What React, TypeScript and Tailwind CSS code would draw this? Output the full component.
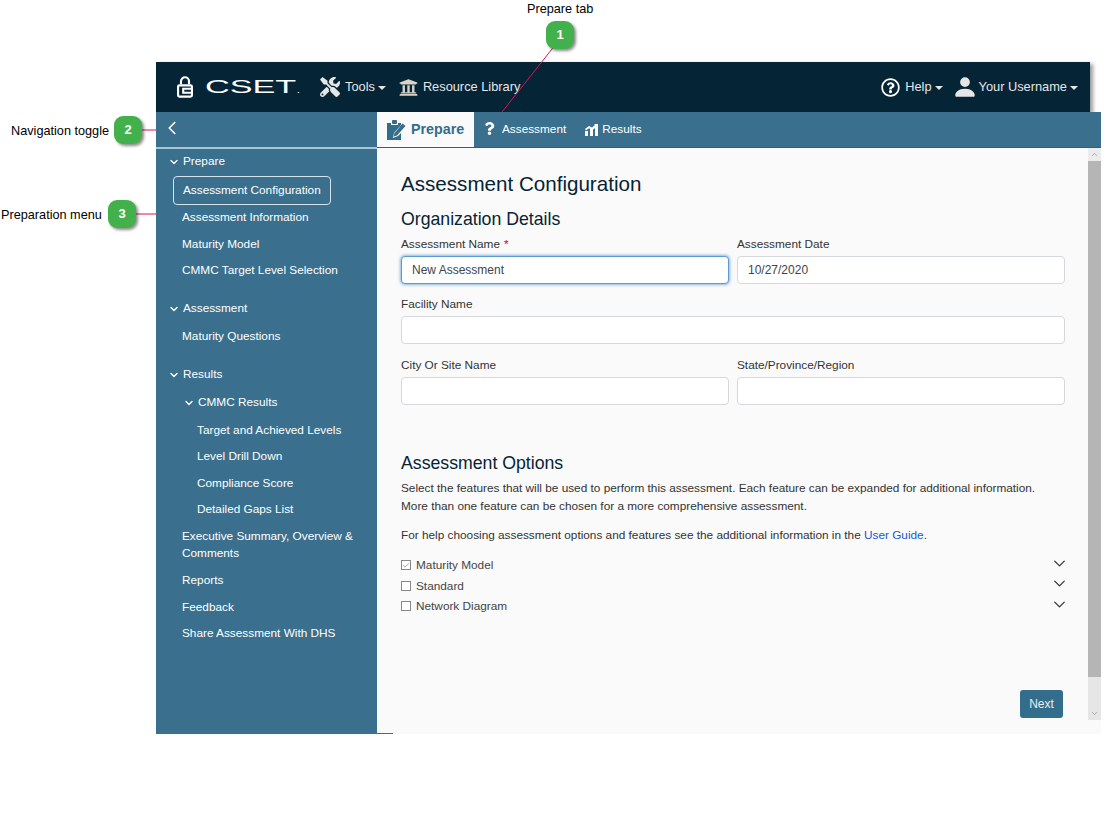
import { FaTools, FaUniversity, FaRegQuestionCircle, FaQuestion } from 'react-icons/fa';
import { BsPersonFill } from 'react-icons/bs';
import { ChevronDown, ChevronLeft, Check } from 'lucide-react';

const FONT = "font-['Liberation_Sans',Arial,sans-serif]";

function Caret() {
  return <span className="ml-[3px] inline-block w-0 h-0 border-x-[4px] border-x-transparent border-t-[4px] border-t-[#e6e6e6] align-middle" />;
}

function LockIcon() {
  return (
    <svg width="16" height="22" viewBox="0 0 18 24" fill="none" stroke="#fff" strokeWidth="2.400">
      <path d="M4.500 9V5.500a4.500 4.500 0 0 1 9 0V9" />
      <rect x="1.200" y="10.200" width="15.600" height="12.600" rx="1.500" />
      <path d="M17 14H7v4.500h10" />
    </svg>
  );
}

function PrepareIcon() {
  return (
    <svg width="19" height="20" viewBox="0 0 19 20" fill="#336d8c">
      <path d="M0 3h4v2h7V3h3v2l-7 8-1 5 5-2 3-3v7H0z" />
      <rect x="5" y="0" width="5" height="4" rx="1" />
      <path d="M15.500 3.500l3 2.500-8.500 9.500-3.300 1 .8-3.300z" />
    </svg>
  );
}

function ResultsIcon() {
  return (
    <svg width="13" height="12" viewBox="0 0 13 12" fill="#fff">
      <rect x="0" y="7" width="3" height="5" />
      <rect x="5" y="5" width="3" height="7" />
      <rect x="10" y="3" width="3" height="9" />
      <path d="M0 5l4-3 3 1.500L10 1 9 0h4v4l-1.200-1.200L7.300 6 4 4.300 1 6.500z" />
    </svg>
  );
}

function MenuHeader({ label, indent = false }: { label: string; indent?: boolean }) {
  return (
    <div className={`flex items-center gap-[3px] ${indent ? 'pl-[27px]' : 'pl-[12px]'}`}>
      <ChevronDown size={12} strokeWidth={2.800} className="text-white" />
      <span>{label}</span>
    </div>
  );
}

function Field({ label, value, required, focused }: { label: string; value?: string; required?: boolean; focused?: boolean }) {
  return (
    <div className="flex-1 min-w-0">
      <div className="text-[11.800px] leading-[15px] text-[#333] mb-[4px]">
        {label}
        {required && <span className="text-[#e00] ml-1">*</span>}
      </div>
      <div
        className={`h-[28px] rounded-[4px] bg-white px-[10px] text-[12px] leading-[26px] text-[#444] border ${
          focused ? 'border-[#5b9bd1] shadow-[0_0_3px_1px_rgba(91,155,209,0.7)] bg-[#f8f9fa]' : 'border-[#d5d8dc]'
        }`}
      >
        {value}
      </div>
    </div>
  );
}

function OptionRow({ label, checked }: { label: string; checked?: boolean }) {
  return (
    <div className="flex items-center h-[20.500px] text-[11.800px] text-[#444]">
      <span className="w-[10px] h-[10px] border border-[#888] bg-white mr-[5px] flex items-center justify-center -mt-[2px]">
        {checked && <Check size={9} strokeWidth={2} className="text-[#777]" />}
      </span>
      <span className="flex-1">{label}</span>
      <ChevronDown size={19} strokeWidth={1.600} className="text-[#333] -mt-[6px] -mr-[4px]" />
    </div>
  );
}

function Badge({ n, className }: { n: number; className: string }) {
  return (
    <div
      className={`absolute w-[28px] h-[28px] rounded-[9px] bg-[#43b14b] text-white font-bold text-[13px] flex items-center justify-center shadow-[2px_2px_3px_rgba(0,0,0,0.45)] ${className}`}
    >
      {n}
    </div>
  );
}

export default function App() {
  return (
    <div className={`relative w-[1110px] h-[818px] bg-white overflow-hidden pt-[62px] pl-[156px] ${FONT}`}>
      <div className="w-[945px] h-[672px] flex flex-col">
        {/* top nav */}
        <div className="w-[934px] h-[50px] shrink-0 bg-[#052436] shadow-[3px_2px_4px_rgba(0,0,0,0.4)] flex items-center text-[#e6e6e6] text-[12.800px] pl-[21px] pr-[12px]">
          <LockIcon />
          <span className="ml-[12px] w-[92px] text-white text-[18px] leading-none origin-left scale-x-[1.900] whitespace-nowrap">
            CSET<span className="text-[8px]">.</span>
          </span>
          <FaTools size={20} className="ml-[23px] text-[#e6e6e6]" />
          <span className="ml-[5px]">Tools<Caret /></span>
          <FaUniversity size={19} className="ml-[13px] text-[#d9d4c8]" />
          <span className="ml-[5px]">Resource Library</span>
          <FaRegQuestionCircle size={19} className="ml-auto text-white" />
          <span className="ml-[5px]">Help<Caret /></span>
          <BsPersonFill size={26} className="ml-[9px] text-[#e6e6e6]" />
          <span className="ml-[1px]">Your Username<Caret /></span>
        </div>

        <div className="flex-1 min-h-0 flex">
          {/* sidebar */}
          <aside className="w-[221px] shrink-0 bg-[#3a6f8d] text-white text-[11.800px]">
            <div className="h-[37px] border-b-2 border-[#a9c5d3] flex items-center pl-[5px]">
              <ChevronLeft size={22} strokeWidth={1.800} className="-mt-[3px]" />
            </div>
            <div className="pt-[4px] leading-[15px]">
              <div className="mt-[1px]"><MenuHeader label="Prepare" /></div>
              <div className="mt-[7px] ml-[17px] w-[158px] h-[29px] border border-[#d5e3ea] rounded-[4px] flex items-center pl-[9px]">Assessment Configuration</div>
              <div className="pl-[26px] mt-[5px]">Assessment Information</div>
              <div className="pl-[26px] mt-[12px]">Maturity Model</div>
              <div className="pl-[26px] mt-[11px]">CMMC Target Level Selection</div>
              <div className="mt-[23px]"><MenuHeader label="Assessment" /></div>
              <div className="pl-[26px] mt-[13px]">Maturity Questions</div>
              <div className="mt-[23px]"><MenuHeader label="Results" /></div>
              <div className="mt-[13px]"><MenuHeader label="CMMC Results" indent /></div>
              <div className="pl-[41px] mt-[13px]">Target and Achieved Levels</div>
              <div className="pl-[41px] mt-[11px]">Level Drill Down</div>
              <div className="pl-[41px] mt-[12px]">Compliance Score</div>
              <div className="pl-[41px] mt-[11px]">Detailed Gaps List</div>
              <div className="pl-[26px] pr-[16px] mt-[11px] leading-[17px]">Executive Summary, Overview &amp; Comments</div>
              <div className="pl-[26px] mt-[11px]">Reports</div>
              <div className="pl-[26px] mt-[12px]">Feedback</div>
              <div className="pl-[26px] mt-[11px]">Share Assessment With DHS</div>
            </div>
          </aside>

          {/* main */}
          <div className="flex-1 min-w-0 flex flex-col bg-[#fafafa]">
            <div className="h-[36px] shrink-0 bg-[#3a6f8d] border-b border-[#2f5f7a] flex items-stretch text-[11.800px] text-white">
              <div className="w-[97px] bg-[#fafafa] text-[#336d8c] font-bold text-[14.300px] flex items-center pl-[10px] gap-[5px]">
                <PrepareIcon />
                <span>Prepare</span>
              </div>
              <div className="flex items-center pl-[9px] gap-[6px]">
                <FaQuestion size={13} className="-mt-[3px]" />
                <span>Assessment</span>
              </div>
              <div className="flex items-center pl-[19px] gap-[4px]">
                <ResultsIcon />
                <span>Results</span>
              </div>
            </div>

            <div className="flex-1 min-h-0 flex">
              <main className="flex-1 min-w-0 pl-[24px] pr-[23px] pt-[23px] flex flex-col">
                <h1 className="text-[20.600px] leading-[26px] text-[#052436]">Assessment Configuration</h1>
                <h2 className="text-[17.700px] leading-[22px] text-[#052436] mt-[11px]">Organization Details</h2>
                <div className="mt-[7px] flex gap-[8px]">
                  <Field label="Assessment Name" value="New Assessment" required focused />
                  <Field label="Assessment Date" value="10/27/2020" />
                </div>
                <div className="mt-[13px]"><Field label="Facility Name" /></div>
                <div className="mt-[14px] flex gap-[8px]">
                  <Field label="City Or Site Name" />
                  <Field label="State/Province/Region" />
                </div>
                <h2 className="text-[17.700px] leading-[22px] text-[#052436] mt-[47px]">Assessment Options</h2>
                <p className="text-[11.800px] leading-[18px] text-[#333] mt-[5px]">
                  Select the features that will be used to perform this assessment. Each feature can be expanded for additional information. More than one feature can be chosen for a more comprehensive assessment.
                </p>
                <p className="text-[11.800px] leading-[18px] text-[#333] mt-[11px]">
                  For help choosing assessment options and features see the additional information in the <span className="text-[#1a56d6]">User Guide</span>.
                </p>
                <div className="mt-[12px]">
                  <OptionRow label="Maturity Model" checked />
                  <OptionRow label="Standard" />
                  <OptionRow label="Network Diagram" />
                </div>
                <div className="mt-auto mb-[15px] flex justify-end">
                  <button className="w-[43px] h-[28px] rounded-[3px] bg-[#336d8c] text-[#e8eef2] text-[12px] mr-[2px]">Next</button>
                </div>
              </main>
              {/* scrollbar */}
              <div className="w-[13px] shrink-0 flex flex-col mb-[13px] bg-[#e6e6e6]">
                <div className="h-[13px] bg-[#ececec] flex items-center justify-center">
                  <ChevronDown size={9} className="rotate-180 text-[#999]" />
                </div>
                <div className="h-[516px] bg-[#b5b5b5]" />
                <div className="mt-auto h-[13px] flex items-center justify-center">
                  <ChevronDown size={9} className="text-[#999]" />
                </div>
              </div>
            </div>
            <div className="h-px w-[16px] shrink-0 bg-[#3a6f8d]" />
          </div>
        </div>
      </div>

      {/* annotation callouts */}
      <svg className="absolute inset-0 pointer-events-none" width="1110" height="818">
        <line x1="556" y1="44" x2="502" y2="112" stroke="#e0105a" strokeWidth="1" />
        <line x1="140" y1="130" x2="156" y2="130" stroke="#e0105a" strokeWidth="1" />
        <line x1="134" y1="214" x2="156" y2="214" stroke="#e0105a" strokeWidth="1" />
      </svg>
      <div className="absolute left-[527px] top-[2px] text-[12.700px] leading-[15px] text-black">Prepare tab</div>
      <div className="absolute left-[11px] top-[124px] text-[12.700px] leading-[15px] text-black">Navigation toggle</div>
      <div className="absolute left-[1px] top-[208px] text-[12.700px] leading-[15px] text-black">Preparation menu</div>
      <Badge n={1} className="left-[546px] top-[21px]" />
      <Badge n={2} className="left-[114px] top-[116px]" />
      <Badge n={3} className="left-[108px] top-[200px]" />
    </div>
  );
}
